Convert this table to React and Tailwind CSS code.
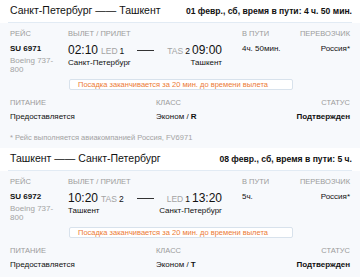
import React from "react";

const segments = [
  {
    from: "Санкт-Петербург",
    to: "Ташкент",
    summary: "01 февр., сб, время в пути: 4 ч. 50 мин.",
    flight: "SU 6971",
    plane: "Boeing 737-800",
    depTime: "02:10",
    depCode: "LED",
    depTerm: "1",
    depCity: "Санкт-Петербург",
    arrTime: "09:00",
    arrCode: "TAS",
    arrTerm: "2",
    arrCity: "Ташкент",
    duration: "4ч. 50мин.",
    carrier: "Россия*",
    meal: "Предоставляется",
    cabin: "Эконом",
    fare: "R",
    status: "Подтвержден",
    note: "* Рейс выполняется авиакомпанией Россия, FV6971",
  },
  {
    from: "Ташкент",
    to: "Санкт-Петербург",
    summary: "08 февр., сб, время в пути: 5 ч.",
    flight: "SU 6972",
    plane: "Boeing 737-800",
    depTime: "10:20",
    depCode: "TAS",
    depTerm: "2",
    depCity: "Ташкент",
    arrTime: "13:20",
    arrCode: "LED",
    arrTerm: "1",
    arrCity: "Санкт-Петербург",
    duration: "5ч.",
    carrier: "Россия*",
    meal: "Предоставляется",
    cabin: "Эконом",
    fare: "T",
    status: "Подтвержден",
  },
];

function Label({ children, className = "" }) {
  return (
    <div className={`text-[7.5px] leading-[10px] uppercase text-[#9b9b9b] ${className}`}>
      {children}
    </div>
  );
}

function Segment({ s }) {
  return (
    <div>
      <div className="bg-white">
        <div className="mx-[8px] h-[23px] pl-[2px] flex items-center justify-between border-b border-[#e2ebf4]">
          <div className="text-[10.5px] text-[#111]">
            {s.from} —— {s.to}
          </div>
          <div className="text-[8.6px] font-bold text-[#111]">{s.summary}</div>
        </div>
      </div>

      <div className="px-[10px] bg-[#f7f9fc]">
        <div className="grid grid-cols-[58px_174px_1fr_auto] pt-[6px]">
          <Label>Рейс</Label>
          <Label>Вылет / прилет</Label>
          <Label>В пути</Label>
          <Label className="text-right">Перевозчик</Label>

          <div className="pt-[4px]">
            <div className="text-[8px] leading-[12px] font-bold text-[#111]">{s.flight}</div>
            <div className="mt-[1px] w-[50px] text-[8px] leading-[9px] text-[#a3a3a3]">{s.plane}</div>
          </div>

          <div className="pt-[4px] w-[154px]">
            <div className="flex items-baseline leading-[14px]">
              <span className="text-[12px] text-[#111]">{s.depTime}</span>
              <span className="ml-[3px] text-[8.5px] text-[#a3a3a3]">{s.depCode}</span>
              <span className="ml-[2px] text-[8.5px] text-[#111]">{s.depTerm}</span>
              <span className="mx-auto w-[17px] h-px bg-[#333] self-center" />
              <span className="text-[8.5px] text-[#a3a3a3]">{s.arrCode}</span>
              <span className="ml-[2px] text-[8.5px] text-[#111]">{s.arrTerm}</span>
              <span className="ml-[2px] text-[12px] text-[#111]">{s.arrTime}</span>
            </div>
            <div className="flex justify-between text-[8px] leading-[10px] text-[#111]">
              <span>{s.depCity}</span>
              <span>{s.arrCity}</span>
            </div>
          </div>

          <div className="pt-[4px] text-[8px] leading-[12px] text-[#111]">{s.duration}</div>
          <div className="pt-[4px] text-[8px] leading-[12px] text-[#111] text-right">{s.carrier}</div>
        </div>

        <div className="ml-[59px] mt-[5px] w-[224px] h-[11px] flex items-center px-[8px] rounded-[2px] border border-[#d8e2ec] bg-white text-[7.5px] text-[#ec7a35]">
          Посадка заканчивается за 20 мин. до времени вылета
        </div>

        <div className="grid grid-cols-[146px_1fr_auto] mt-[8px]">
          <Label>Питание</Label>
          <Label>Класс</Label>
          <Label className="text-right">Статус</Label>
          <div className="mt-[4px] text-[8px] leading-[10px] text-[#111]">{s.meal}</div>
          <div className="mt-[4px] text-[8px] leading-[10px] text-[#111]">
            {s.cabin} / <span className="font-bold">{s.fare}</span>
          </div>
          <div className="mt-[4px] text-[8px] leading-[10px] font-bold text-[#111] text-right">{s.status}</div>
        </div>

        {s.note ? (
          <div className="pt-[11px] pb-[5px] text-[7.5px] leading-[10px] text-[#a3a3a3]">{s.note}</div>
        ) : (
          <div className="h-[6px]" />
        )}
      </div>
    </div>
  );
}

export default function App() {
  return (
    <div
      className="w-[360px] h-[277px] overflow-hidden bg-[#f7f9fc]"
      style={{ fontFamily: '"Liberation Sans", Arial, sans-serif' }}
    >
      {segments.map((s, i) => (
        <Segment key={i} s={s} />
      ))}
    </div>
  );
}
